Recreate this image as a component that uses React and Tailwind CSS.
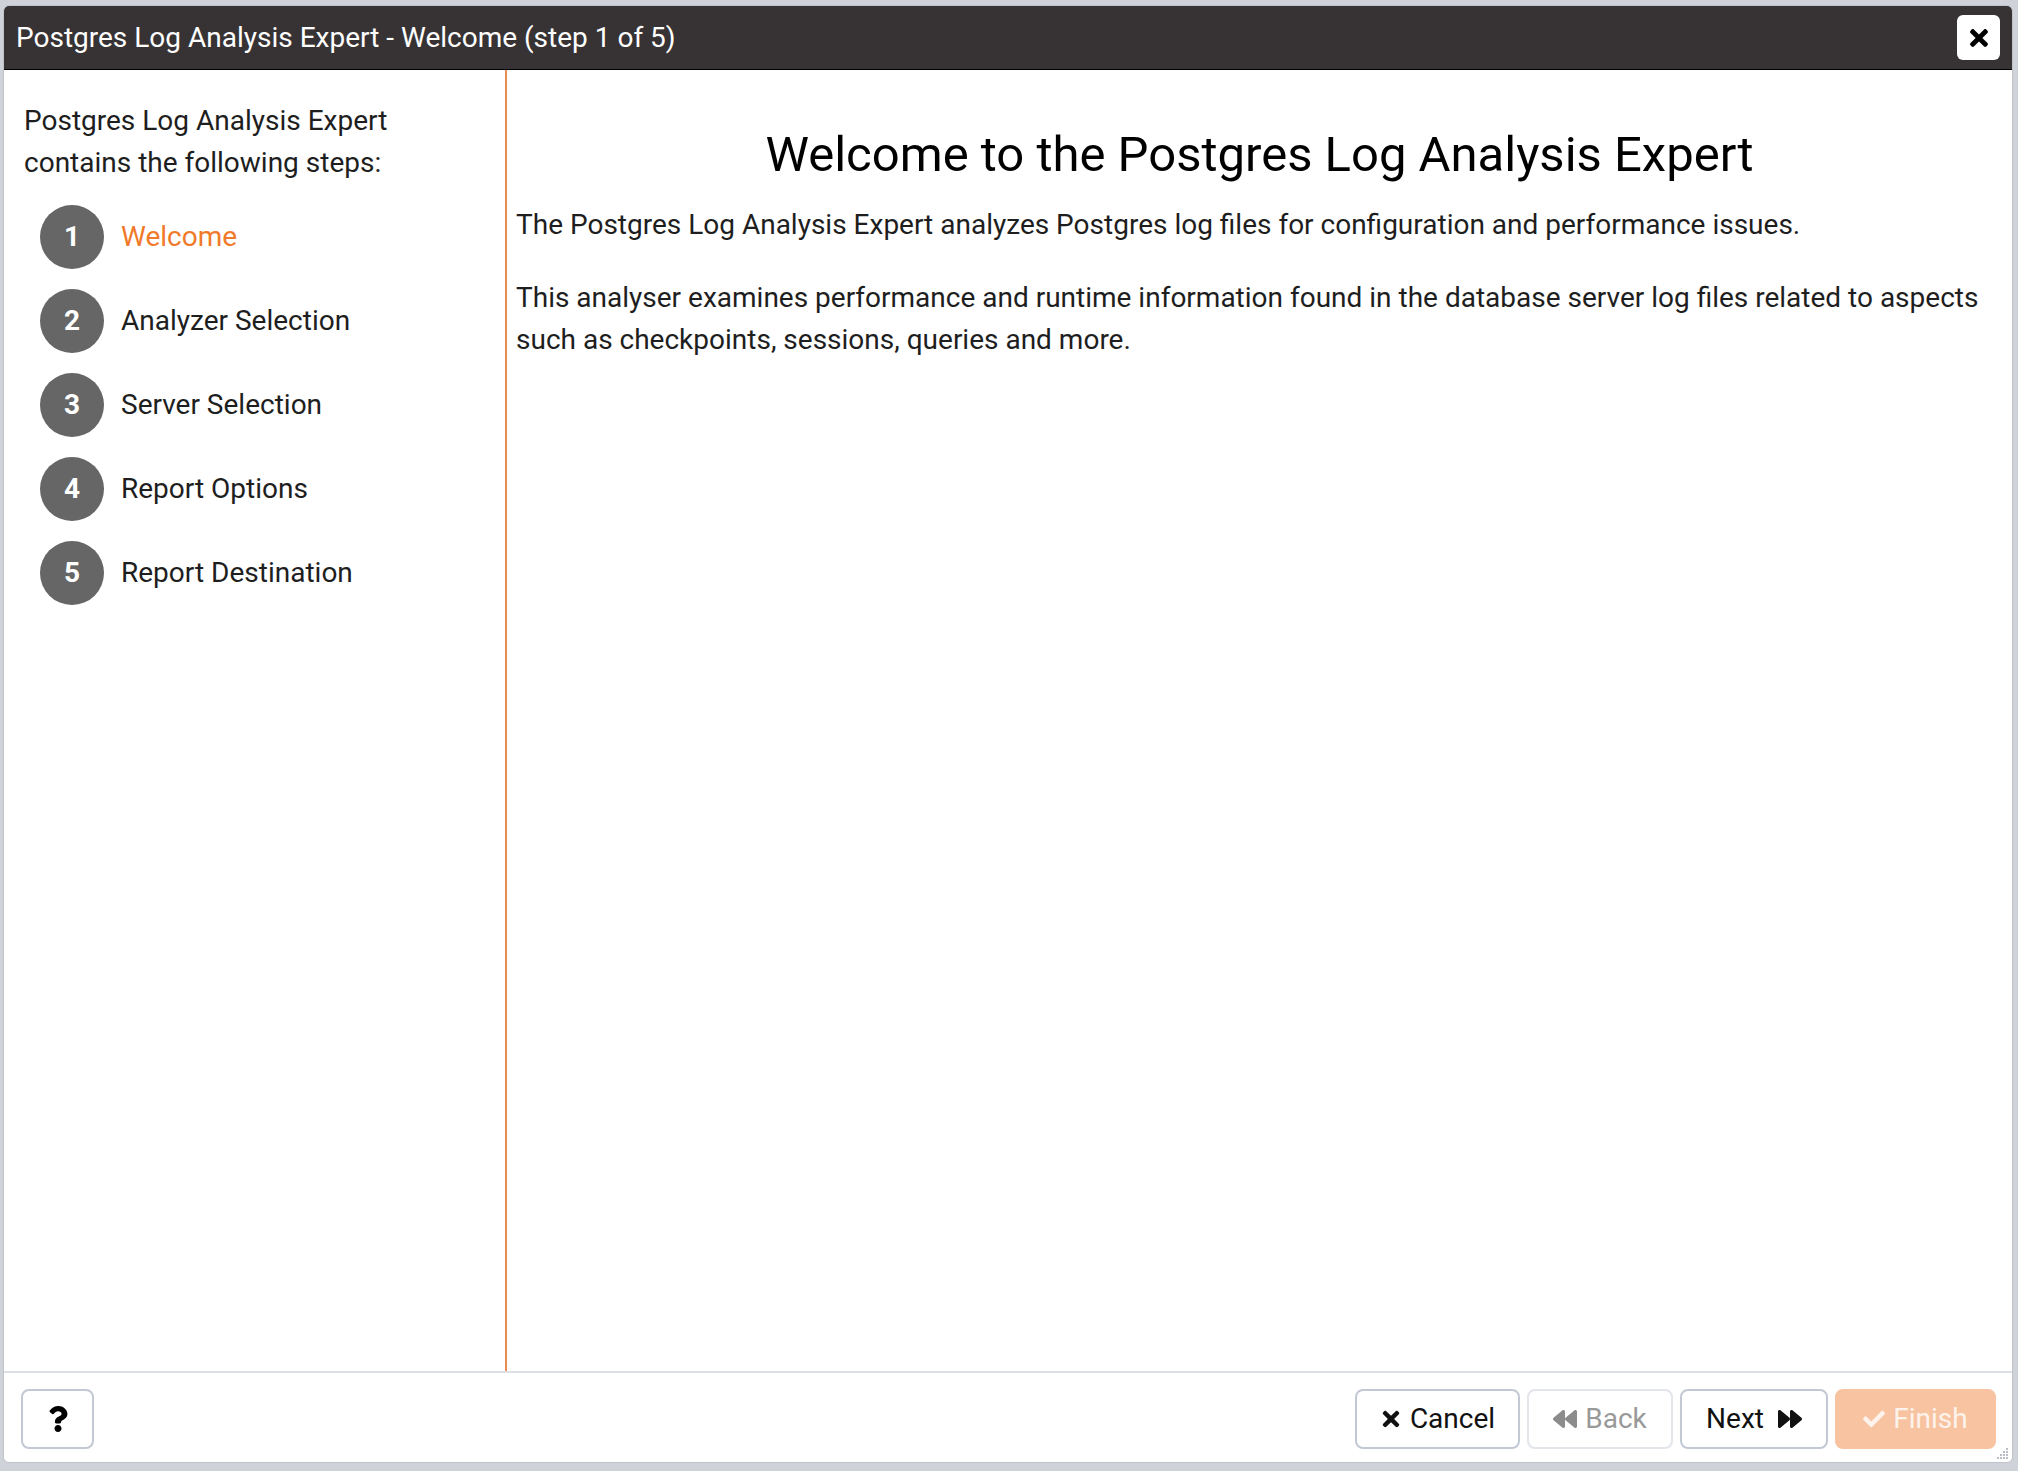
import React from "react";
import { FaTimes, FaBackward, FaForward, FaCheck, FaQuestion } from "react-icons/fa";

const steps = [
  "Welcome",
  "Analyzer Selection",
  "Server Selection",
  "Report Options",
  "Report Destination",
];

const StepItem = ({ num, label, active }) => (
  <div className="flex items-center h-[84px]">
    <div className="w-[64px] h-[64px] rounded-full bg-[#666666] flex items-center justify-center text-white font-bold text-[28px]">
      {num}
    </div>
    <span className={`ml-[17px] text-[28px] ${active ? "text-[#f07a2a]" : "text-[#1e1e1e]"}`}>{label}</span>
  </div>
);

const FooterButton = ({ className, children }) => (
  <button
    type="button"
    className={`h-[60px] rounded-[8px] border-2 flex items-center justify-center gap-[8px] text-[28px] ${className}`}
  >
    {children}
  </button>
);

const ResizeGrip = () => (
  <svg width="14" height="14" viewBox="0 0 14 14" className="absolute right-[2px] bottom-[2px]">
    {[
      [11, 3], [8, 6], [11, 6], [5, 9], [8, 9], [11, 9], [2, 12], [5, 12], [8, 12], [11, 12],
    ].map(([cx, cy], i) => (
      <rect key={i} x={cx - 1} y={cy - 1} width="2" height="2" fill="#b9bec7" />
    ))}
  </svg>
);

export default function App() {
  return (
    <div
      className="w-[2018px] h-[1471px] bg-[#cfd2d8] pt-[5px] pl-[3px] pr-[5px] pb-[8px]"
      style={{ fontFamily: "Roboto, 'Noto Sans', sans-serif" }}
    >
      <div className="relative h-full flex flex-col bg-white rounded-[6px] border border-[#bfc3cb] overflow-hidden">
        {/* title bar */}
        <div className="h-[64px] shrink-0 bg-[#373334] border-b border-black flex items-center justify-between pl-[12px] pr-[12px]">
          <span className="text-white text-[28px] leading-none">
            Postgres Log Analysis Expert - Welcome (step 1 of 5)
          </span>
          <button
            type="button"
            className="w-[43px] h-[45px] bg-white rounded-[6px] flex items-center justify-center text-black"
          >
            <FaTimes className="w-[26px] h-[26px]" />
          </button>
        </div>

        {/* body */}
        <div className="flex-1 flex min-h-0">
          <div className="w-[503px] shrink-0 border-r-2 border-[#ec8a52] pl-[20px] pt-[30px]">
            <p className="text-[28px] leading-[42px] text-[#1e1e1e]">
              Postgres Log Analysis Expert
              <br />
              contains the following steps:
            </p>
            <div className="mt-[11px] pl-[16px]">
              {steps.map((s, i) => (
                <StepItem key={s} num={i + 1} label={s} active={i === 0} />
              ))}
            </div>
          </div>

          <div className="flex-1 pl-[9px] pr-[9px] pt-[56px] text-[#1e1e1e]">
            <h1 className="text-center text-[49px] leading-[58px] text-black">
              Welcome to the Postgres Log Analysis Expert
            </h1>
            <p className="mt-[20px] text-[28px] leading-[42px]">
              The Postgres Log Analysis Expert analyzes Postgres log files for configuration and performance issues.
            </p>
            <p className="mt-[31px] text-[28px] leading-[42px]">
              This analyser examines performance and runtime information found in the database server log files related to aspects such as checkpoints, sessions, queries and more.
            </p>
          </div>
        </div>

        {/* footer */}
        <div className="h-[91px] shrink-0 border-t-2 border-[#dde1e7] flex items-start justify-between pt-[16px] pl-[17px] pr-[16px]">
          <FooterButton className="w-[73px] border-[#c3c9d4] text-black">
            <FaQuestion className="w-[20px] h-[26px]" />
          </FooterButton>
          <div className="flex gap-[7px]">
            <FooterButton className="w-[165px] border-[#c3c9d4] text-[#111111]">
              <FaTimes className="w-[22px] h-[24px]" />
              <span>Cancel</span>
            </FooterButton>
            <FooterButton className="w-[146px] border-[#e2e5ea] text-[#999999]">
              <FaBackward className="w-[24px] h-[24px] text-[#8c8c8c]" />
              <span>Back</span>
            </FooterButton>
            <FooterButton className="w-[148px] border-[#c3c9d4] text-[#111111] gap-[14px]">
              <span>Next</span>
              <FaForward className="w-[24px] h-[24px]" />
            </FooterButton>
            <FooterButton className="w-[161px] border-[#f7c3a0] bg-[#f7c3a0] text-[#fdf3ec]">
              <FaCheck className="w-[22px] h-[22px]" />
              <span>Finish</span>
            </FooterButton>
          </div>
        </div>
        <ResizeGrip />
      </div>
    </div>
  );
}
